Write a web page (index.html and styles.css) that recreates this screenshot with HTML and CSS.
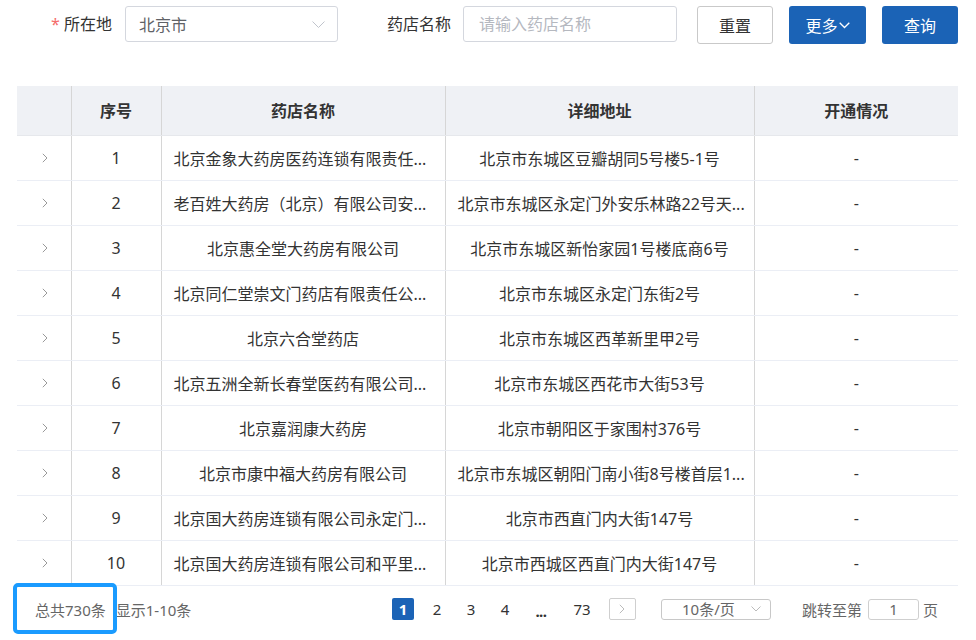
FILE: index.html
```html
<!DOCTYPE html>
<html lang="zh-CN">
<head>
<meta charset="utf-8">
<title>药店列表</title>
<link rel="stylesheet" href="styles.css">
</head>
<body>
<div class="page">
  <div class="filters">
    <div class="field">
      <label class="label label-loc"><span class="req">*</span> 所在地</label>
      <div class="select">
        <span class="select-value">北京市</span>
        <svg class="select-arrow" width="13" height="7" viewBox="0 0 13 7"><polyline points="0.5,0.5 6.5,6.5 12.5,0.5" fill="none" stroke="#c0c4cc" stroke-width="1"/></svg>
      </div>
    </div>
    <div class="field field-name">
      <label class="label">药店名称</label>
      <div class="input"><span class="placeholder">请输入药店名称</span></div>
    </div>
    <button class="btn btn-default btn-reset" type="button">重置</button>
    <button class="btn btn-primary btn-more" type="button">更多<svg class="more-arrow" width="11" height="7" viewBox="0 0 11 7"><polyline points="0.7,0.7 5.5,5.5 10.3,0.7" fill="none" stroke="#fff" stroke-width="1.3"/></svg></button>
    <button class="btn btn-primary btn-query" type="button">查询</button>
  </div>

  <table class="grid">
    <colgroup>
      <col class="c-exp"><col class="c-no"><col class="c-name"><col class="c-addr"><col class="c-status">
    </colgroup>
    <thead>
      <tr><th></th><th>序号</th><th>药店名称</th><th>详细地址</th><th>开通情况</th></tr>
    </thead>
    <tbody>
      <tr><td class="exp"><svg width="6" height="10" viewBox="0 0 6 10"><polyline points="0.8,0.8 5,5 0.8,9.2" fill="none" stroke="#999" stroke-width="1"/></svg></td><td>1</td><td class="clip">北京金象大药房医药连锁有限责任...</td><td>北京市东城区豆瓣胡同5号楼5-1号</td><td>-</td></tr>
      <tr><td class="exp"><svg width="6" height="10" viewBox="0 0 6 10"><polyline points="0.8,0.8 5,5 0.8,9.2" fill="none" stroke="#999" stroke-width="1"/></svg></td><td>2</td><td class="clip">老百姓大药房（北京）有限公司安...</td><td class="clip">北京市东城区永定门外安乐林路22号天...</td><td>-</td></tr>
      <tr><td class="exp"><svg width="6" height="10" viewBox="0 0 6 10"><polyline points="0.8,0.8 5,5 0.8,9.2" fill="none" stroke="#999" stroke-width="1"/></svg></td><td>3</td><td>北京惠全堂大药房有限公司</td><td>北京市东城区新怡家园1号楼底商6号</td><td>-</td></tr>
      <tr><td class="exp"><svg width="6" height="10" viewBox="0 0 6 10"><polyline points="0.8,0.8 5,5 0.8,9.2" fill="none" stroke="#999" stroke-width="1"/></svg></td><td>4</td><td class="clip">北京同仁堂崇文门药店有限责任公...</td><td>北京市东城区永定门东街2号</td><td>-</td></tr>
      <tr><td class="exp"><svg width="6" height="10" viewBox="0 0 6 10"><polyline points="0.8,0.8 5,5 0.8,9.2" fill="none" stroke="#999" stroke-width="1"/></svg></td><td>5</td><td>北京六合堂药店</td><td>北京市东城区西革新里甲2号</td><td>-</td></tr>
      <tr><td class="exp"><svg width="6" height="10" viewBox="0 0 6 10"><polyline points="0.8,0.8 5,5 0.8,9.2" fill="none" stroke="#999" stroke-width="1"/></svg></td><td>6</td><td class="clip">北京五洲全新长春堂医药有限公司...</td><td>北京市东城区西花市大街53号</td><td>-</td></tr>
      <tr><td class="exp"><svg width="6" height="10" viewBox="0 0 6 10"><polyline points="0.8,0.8 5,5 0.8,9.2" fill="none" stroke="#999" stroke-width="1"/></svg></td><td>7</td><td>北京嘉润康大药房</td><td>北京市朝阳区于家围村376号</td><td>-</td></tr>
      <tr><td class="exp"><svg width="6" height="10" viewBox="0 0 6 10"><polyline points="0.8,0.8 5,5 0.8,9.2" fill="none" stroke="#999" stroke-width="1"/></svg></td><td>8</td><td>北京市康中福大药房有限公司</td><td class="clip">北京市东城区朝阳门南小街8号楼首层1...</td><td>-</td></tr>
      <tr><td class="exp"><svg width="6" height="10" viewBox="0 0 6 10"><polyline points="0.8,0.8 5,5 0.8,9.2" fill="none" stroke="#999" stroke-width="1"/></svg></td><td>9</td><td class="clip">北京国大药房连锁有限公司永定门...</td><td>北京市西直门内大街147号</td><td>-</td></tr>
      <tr><td class="exp"><svg width="6" height="10" viewBox="0 0 6 10"><polyline points="0.8,0.8 5,5 0.8,9.2" fill="none" stroke="#999" stroke-width="1"/></svg></td><td>10</td><td class="clip">北京国大药房连锁有限公司和平里...</td><td>北京市西城区西直门内大街147号</td><td>-</td></tr>
    </tbody>
  </table>

  <div class="footer">
    <div class="summary">
      <span class="total">总共730条</span><span class="range">显示1-10条</span>
      <span class="highlight"></span>
    </div>
    <div class="pager">
      <ul class="pages">
        <li class="pg active">1</li>
        <li class="pg">2</li>
        <li class="pg">3</li>
        <li class="pg">4</li>
        <li class="pg dots">...</li>
        <li class="pg last">73</li>
        <li class="pg next"><svg width="6" height="10" viewBox="0 0 6 10"><polyline points="0.8,0.8 5,5 0.8,9.2" fill="none" stroke="#bbb" stroke-width="1"/></svg></li>
      </ul>
      <div class="size-select"><span>10条/页</span><svg width="10" height="6" viewBox="0 0 10 6"><polyline points="0.5,0.5 5,5 9.5,0.5" fill="none" stroke="#bbb" stroke-width="1"/></svg></div>
      <div class="jump"><span>跳转至第</span><span class="jump-input">1</span><span>页</span></div>
    </div>
  </div>
</div>
</body>
</html>
```

FILE: styles.css
```css
* {
  box-sizing: border-box;
  margin: 0;
  padding: 0;
}

html, body {
  width: 976px;
  height: 640px;
  overflow: hidden;
  background: #fff;
}

body {
  font-family: "Noto Sans", "Noto Sans CJK SC", sans-serif;
  font-size: 16px;
  color: #333;
}

.page {
  width: 976px;
}

/* ---------- filter bar ---------- */
.filters {
  display: flex;
  align-items: flex-start;
  padding-top: 6px;
  height: 44px;
}

.field {
  display: flex;
  align-items: center;
  height: 36px;
}

.label {
  line-height: 36px;
  color: #333;
  padding-right: 13px;
  text-align: right;
  white-space: nowrap;
}

.label-loc {
  width: 125px;
}

.req {
  color: #f56c6c;
}

.select {
  width: 213px;
  height: 36px;
  border: 1px solid #d4d7de;
  border-radius: 3px;
  display: flex;
  align-items: center;
  justify-content: space-between;
  padding: 0 12px 0 13px;
  color: #606266;
}

.select-arrow {
  display: block;
}

.field-name {
  margin-left: 49px;
}

.field-name .label {
  padding-right: 12px;
}

.input {
  width: 214px;
  height: 36px;
  border: 1px solid #d4d7de;
  border-radius: 3px;
  padding: 0 15px;
  line-height: 34px;
}

.placeholder {
  color: #b5b8bf;
}

.btn {
  height: 38px;
  border-radius: 3px;
  font: inherit;
  font-size: 16px;
  display: flex;
  align-items: center;
  justify-content: center;
  cursor: pointer;
}

.btn-default {
  width: 76px;
  margin-left: 20px;
  background: #fff;
  color: #333;
  border: 1px solid #c9c9c9;
}

.btn-primary {
  background: #1b63b6;
  color: #fff;
  border: none;
  margin-left: 16px;
}

.btn-more {
  width: 77px;
}

.more-arrow {
  margin-left: 1px;
  margin-top: 1px;
}

.btn-query {
  width: 76px;
}

/* ---------- table ---------- */
.grid {
  margin: 42px 0 0 17px;
  width: 941px;
  border-collapse: collapse;
  table-layout: fixed;
}

.c-exp { width: 54px; }
.c-no { width: 90px; }
.c-name { width: 284px; }
.c-addr { width: 309px; }
.c-status { width: 204px; }

.grid th {
  height: 49px;
  background: #eff1f5;
  font-weight: bold;
  color: #333;
  text-align: center;
  border-left: 1px solid #d6d6d6;
  border-bottom: 1px solid #e6e8ec;
  padding: 0 12px;
}

.grid td {
  height: 45px;
  text-align: center;
  color: #333;
  border-left: 1px solid #d6d6d6;
  border-bottom: 1px solid #ebeef5;
  padding: 0 12px;
  white-space: nowrap;
  overflow: visible;
}

.grid td.clip {
  text-align: left;
}

.grid th:first-child,
.grid td:first-child {
  border-left: none;
}

.grid td.exp {
  padding: 0;
}

.grid td.exp svg {
  display: block;
  margin: 1px auto 0;
  position: relative;
  left: 1px;
}

/* ---------- footer ---------- */
.footer {
  position: relative;
  display: flex;
  align-items: center;
  height: 46px;
  padding: 1px 38px 0 35px;
  font-size: 15px;
  color: #666;
}

.summary {
  display: flex;
  align-items: center;
}

.range {
  margin-left: 10px;
}

.highlight {
  position: absolute;
  left: 13px;
  top: -3px;
  width: 104px;
  height: 51px;
  border: 4px solid #1a9bff;
  border-radius: 5px;
}

.pager {
  margin-left: auto;
  display: flex;
  align-items: center;
}

.pages {
  list-style: none;
  display: flex;
  align-items: center;
}

.pg {
  width: 22px;
  height: 22px;
  line-height: 22px;
  text-align: center;
  margin-right: 12px;
  color: #333;
  font-size: 15px;
}

.pg.active {
  background: #1b63b6;
  color: #fff;
  font-weight: bold;
  border-radius: 2px;
}

.pg.dots {
  margin-left: 2px;
  margin-right: 17px;
  font-weight: bold;
  letter-spacing: -0.5px;
  line-height: 26px;
}

.pg.last {
  width: 26px;
  margin-right: 14px;
}

.pg.next {
  width: 27px;
  border: 1px solid #cfcfcf;
  border-radius: 2px;
  display: flex;
  align-items: center;
  justify-content: center;
  margin-right: 0;
}

.size-select {
  margin-left: 25px;
  width: 110px;
  height: 21px;
  border: 1px solid #c8c8c8;
  border-radius: 3px;
  display: flex;
  align-items: center;
  justify-content: space-between;
  padding: 0 9px 0 20px;
  line-height: 19px;
}

.jump {
  margin-left: 31px;
  display: flex;
  align-items: center;
}

.jump-input {
  width: 51px;
  height: 21px;
  line-height: 19px;
  border: 1px solid #cfcfcf;
  border-radius: 3px;
  text-align: center;
  margin: 0 4px 0 6px;
  color: #666;
}
```
